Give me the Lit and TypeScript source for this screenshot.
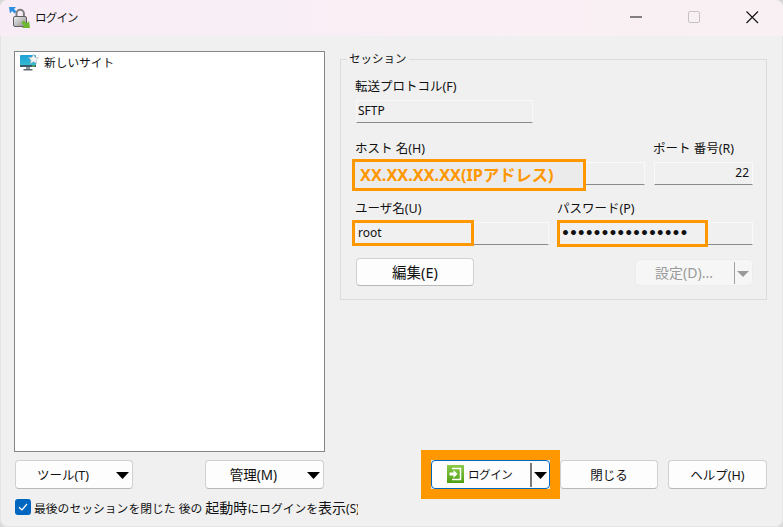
import { LitElement, html, css } from "lit";
import { customElement } from "lit/decorators.js";

const caret = html`<svg class="caret" width="13" height="7" viewBox="0 0 13 7"><path d="M0 0H13L6.5 7Z" fill="#000"/></svg>`;

@customElement("app-root")
export class AppRoot extends LitElement {
  static styles = css`
    :host { display: block; width: 783px; height: 527px; background: #d9d9d9; font-family: "Noto Sans", "Noto Sans CJK JP", sans-serif; font-size: 12px; color: #111; }
    * { box-sizing: border-box; }
    .win { width: 783px; height: 527px; background: #f0f0f0; border-radius: 8px; overflow: hidden; display: flex; flex-direction: column; box-shadow: inset 0 0 0 1px #e4e4e4; }
    .title { height: 36px; flex: none; background: linear-gradient(90deg, #f8edf6, #f9f0f3); display: flex; align-items: center; padding: 0 2px 2px 9px; }
    .title-text { margin-left: 5px; font-size: 11.5px; letter-spacing: -0.8px; }
    .controls { margin-left: auto; display: flex; align-items: center; }
    .ctl { width: 58px; height: 34px; display: flex; align-items: center; justify-content: center; }
    .main { display: flex; gap: 15px; padding: 15px 16px 0 14px; }
    .left { width: 311px; flex: none; }
    .tree { height: 401px; background: #fff; border: 1px solid #82878c; padding: 2px 5px; display: flex; align-items: flex-start; gap: 5px; line-height: 16px; font-size: 11.7px; }
    .tools { display: flex; justify-content: space-between; margin: 8px 1px 0 1px; }
    .right { flex: 1; display: flex; flex-direction: column; justify-content: space-between; height: 438px; }
    fieldset { margin: 1px 0 0; padding: 12px 13px 0 15px; height: 248px; border: 1px solid #dcdcdc; min-width: 0; }
    legend { padding: 0 2px; margin-left: -9px; line-height: 14px; font-size: 11.5px; }
    label { display: block; line-height: 18px; height: 16px; font-size: 12.5px; white-space: nowrap; margin: 0 0 6px -1px; }
    .field { position: relative; height: 23px; background: #f0f0f0; border: 1px solid #f9f9f9; border-bottom-color: #8a8a8a; line-height: 20px; padding-left: 1px; }
    .row { display: flex; gap: 9px; margin-top: 17px; }
    .row.tight { margin-top: 15px; }
    .proto { width: 177px; }
    .host { width: 289px; }
    .port { width: 99px; }
    .num { text-align: right; padding-right: 3px; }
    .user { width: 193px; }
    .pass { width: 195px; }
    .mark { position: absolute; border: 3px solid #ff9800; }
    .mark.h { left: -5px; top: -4px; width: 234px; height: 32px; background: #ebebeb; color: #ff9800; font-weight: 700; font-size: 16.3px; line-height: 26px; padding-left: 5px; white-space: nowrap; }
    .mark.u { left: -5px; top: -3px; width: 122px; height: 26px; padding-left: 3px; line-height: 20px; }
    .mark.p { left: -2px; top: -3px; width: 151px; height: 27px; padding-left: 1px; line-height: 21px; white-space: nowrap; }
    .dots { font-size: 14px; font-family: "DejaVu Sans", sans-serif; font-weight: 700; letter-spacing: -1.05px; }
    .btn { height: 29px; background: #fdfdfd; border: 1px solid #d0d0d0; border-bottom-color: #b8b8b8; border-radius: 4px; display: flex; align-items: center; justify-content: center; padding-bottom: 1px; font-size: 12.5px; position: relative; white-space: nowrap; }
    .tool { width: 118px; }
    .tool.m { width: 119px; font-size: 13.5px; }
    .tool span { margin-right: 22px; }
    .caret { position: absolute; right: 3px; top: 11px; }
    .actions { display: flex; gap: 12px; margin-top: 13px; justify-content: space-between; }
    .edit { width: 118px; height: 28px; font-size: 14.5px; padding-bottom: 2px; }
    .cfg { width: 118px; height: 27px; margin-top: 1px; padding-bottom: 2px; background: #f6f6f6; border-color: #ececec; color: #9a9a9a; font-size: 14px; }
    .cfg span { margin-right: 20px; }
    .sep { position: absolute; right: 17px; top: 2px; width: 1px; height: 22px; background: #a0a0a0; }
    .gcaret { position: absolute; right: 3px; top: 11px; }
    .bottom { display: flex; gap: 10px; justify-content: flex-end; }
    .login { width: 119px; border: 1px solid #0067c0; gap: 3px; justify-content: flex-start; padding-left: 15px; font-size: 11.5px; letter-spacing: -0.4px; }
    .login::before { content: ""; position: absolute; inset: -11px; border: 10px solid #ff9800; }
    .login .sep { right: 17px; top: 2px; width: 2px; height: 24px; background: #7a7a7a; }
    .login .caret { right: 2px; top: 11px; }
    .close { width: 98px; }
    .help { width: 99px; }
    .check { display: flex; align-items: center; gap: 3px; width: 343px; margin: 10px 0 0 15px; height: 16px; overflow: hidden; white-space: nowrap; font-size: 11.8px; }
    .check .k { font-size: 14px; }
    .box { width: 16px; height: 16px; flex: none; }
  `;

  render() {
    return html`
      <div class="win">
        <div class="title">
          <svg width="21" height="21" viewBox="0 0 21 21">
            <defs>
              <linearGradient id="lk" x1="0" y1="0" x2="1" y2="1"><stop offset="0" stop-color="#f2f2f2"/><stop offset="1" stop-color="#8b8b8b"/></linearGradient>
              <linearGradient id="gr" x1="0" y1="0" x2="0" y2="1"><stop offset="0" stop-color="#8ccb4b"/><stop offset="1" stop-color="#4f9f12"/></linearGradient>
              <linearGradient id="sc" x1="0" y1="0" x2="0" y2="1"><stop offset="0" stop-color="#1f9fd8"/><stop offset="1" stop-color="#35c2d2"/></linearGradient>
            </defs>
            <path d="M7.500 10V6.500a3.700 3.700 0 0 1 7.400 0V10" fill="none" stroke="#7f7f7f" stroke-width="2"/>
            <rect x="4.500" y="9.500" width="13" height="10" rx="1.500" fill="url(#lk)" stroke="#5f5f5f"/>
            <path d="M0 0h7L5 2l2.500 2.500-2 2L3 4 1 6.500Z" fill="#2f8fe0"/>
            <path d="M21 21h-8l2.200-2.200-3-3 2.500-2.300 3 3L20 14Z" fill="#6cb82e"/>
          </svg>
          <span class="title-text">ログイン</span>
          <div class="controls">
            <div class="ctl"><svg width="13" height="2"><rect width="12" height="1" y="0.500" fill="#111"/></svg></div>
            <div class="ctl"><svg width="13" height="13"><rect x="0.500" y="0.500" width="11" height="11" rx="1.500" fill="none" stroke="#c4c4c4"/></svg></div>
            <div class="ctl"><svg width="13" height="13"><path d="M.5.5 12 12M12 .5.500 12" stroke="#111" stroke-width="1.100" fill="none"/></svg></div>
          </div>
        </div>
        <div class="main">
          <div class="left">
            <div class="tree">
              <svg width="19" height="18" viewBox="0 0 19 18">
                <rect x="0" y="1" width="16" height="12" rx="1" fill="url(#sc)"/>
                <rect x="0" y="11" width="16" height="2" fill="#3f5a68"/>
                <rect x="12" y="11.500" width="3" height="1" fill="#5fd05a"/>
                <rect x="6" y="13" width="4" height="2" fill="#8a98a0"/>
                <rect x="3.500" y="15" width="9" height="1.500" fill="#5c6a72"/>
                <path d="M13.500 0l1.500 3.200 3.500.4-2.500 2.400.7 3.400-3.200-1.700-3.100 1.700.6-3.400-2.500-2.400 3.500-.4Z" fill="#f2f4f6" stroke="#aab2b8" stroke-width=".6"/>
              </svg>
              <span>新しいサイト</span>
            </div>
            <div class="tools">
              <div class="btn tool"><span>ツール(T)</span>${caret}</div>
              <div class="btn tool m"><span>管理(M)</span>${caret}</div>
            </div>
          </div>
          <div class="right">
            <fieldset>
              <legend>セッション</legend>
              <label>転送プロトコル(F)</label>
              <div class="field proto">SFTP</div>
              <div class="row">
                <div><label>ホスト 名(H)</label><div class="field host"><div class="mark h">XX.XX.XX.XX(IPアドレス)</div></div></div>
                <div><label>ポート 番号(R)</label><div class="field port num">22</div></div>
              </div>
              <div class="row tight">
                <div><label>ユーザ名(U)</label><div class="field user"><div class="mark u">root</div></div></div>
                <div><label>パスワード(P)</label><div class="field pass"><div class="mark p"><span class="dots">••••••••••••••••</span></div></div></div>
              </div>
              <div class="actions">
                <div class="btn edit">編集(E)</div>
                <div class="btn cfg"><span>設定(D)...</span><i class="sep"></i>
                  <svg class="gcaret" width="12" height="6" viewBox="0 0 12 6"><path d="M0 0H12L6 6Z" fill="#9a9a9a"/></svg>
                </div>
              </div>
            </fieldset>
            <div class="bottom">
              <div class="btn login">
                <svg width="18" height="18" viewBox="0 0 18 18">
                  <rect width="17" height="18" fill="url(#gr)"/>
                  <path d="M5 3.500H13.500V14.500H5" fill="none" stroke="#fff" stroke-width="1.500"/>
                  <path d="M2.500 7.500H6.500V5L10.500 9 6.500 13V10.500H2.500Z" fill="#fff"/>
                </svg>
                <span>ログイン</span><i class="sep"></i>${caret}
              </div>
              <div class="btn close">閉じる</div>
              <div class="btn help">ヘルプ(H)</div>
            </div>
          </div>
        </div>
        <div class="check">
          <svg class="box" viewBox="0 0 16 16"><rect width="16" height="16" rx="3" fill="#0067c0"/><path d="M4 8.300 7 11l5-6" fill="none" stroke="#fff" stroke-width="1.200"/></svg>
          <span>最後のセッションを閉じた 後の <span class="k">起動時</span>にログインを<span class="k">表示</span>(S)</span>
        </div>
      </div>
    `;
  }
}
